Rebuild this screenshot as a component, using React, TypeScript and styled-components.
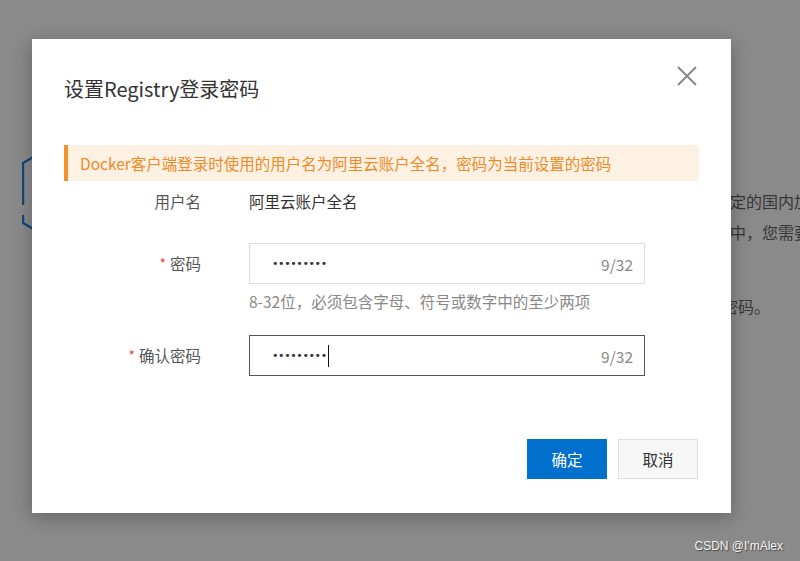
import styled, { createGlobalStyle } from 'styled-components';

const GlobalStyle = createGlobalStyle`
  html, body {
    margin: 0;
    padding: 0;
    width: 800px;
    height: 561px;
    overflow: hidden;
    background: #fff;
    font-family: 'Noto Sans CJK SC', 'Noto Sans', sans-serif;
  }
  * { box-sizing: border-box; }
`;

export default function App() {
  return (
    <Screen>
      <GlobalStyle />
      <BgPage>
        <Hexagon width="106" height="122" viewBox="0 0 106 122">
          <path
            d="M1 73 L1 31 L53 1 L105 31 L105 91 L53 121 L1 91 L1 83"
            fill="none"
            stroke="#1b86e6"
            strokeWidth="2.5"
          />
        </Hexagon>
        <BgText>
          <BgPara>
            <BgLine>指定的国内加速地址</BgLine>
            <BgLine>程中，您需要使用</BgLine>
            <BgLine />
          </BgPara>
          <BgPara $indent={8}>
            <BgLine>密码。</BgLine>
          </BgPara>
        </BgText>
      </BgPage>

      <Mask />

      <Dialog>
        <Header>
          <Title>设置Registry登录密码</Title>
          <CloseButton aria-label="关闭">
            <svg width="20" height="20" viewBox="0 0 20 20">
              <path d="M1 1 L19 19 M19 1 L1 19" stroke="#888" strokeWidth="2" fill="none" />
            </svg>
          </CloseButton>
        </Header>

        <Body>
          <Alert>Docker客户端登录时使用的用户名为阿里云账户全名，密码为当前设置的密码</Alert>

          <FormItem $gap={21}>
            <Label>用户名</Label>
            <StaticValue>阿里云账户全名</StaticValue>
          </FormItem>

          <FormItem $gap={23}>
            <Label>
              <Required>*</Required>密码
            </Label>
            <Control>
              <InputBox>
                <Dots>•••••••••</Dots>
                <Counter>9/32</Counter>
              </InputBox>
              <Help>8-32位，必须包含字母、符号或数字中的至少两项</Help>
            </Control>
          </FormItem>

          <FormItem $gap={0}>
            <Label>
              <Required>*</Required>确认密码
            </Label>
            <Control>
              <InputBox $focused>
                <Dots>•••••••••</Dots>
                <Caret />
                <Counter>9/32</Counter>
              </InputBox>
            </Control>
          </FormItem>
        </Body>

        <Footer>
          <Button $primary>确定</Button>
          <Button>取消</Button>
        </Footer>
      </Dialog>

      <Watermark>CSDN @I'mAlex</Watermark>
    </Screen>
  );
}

const Screen = styled.div`
  position: relative;
  width: 800px;
  height: 561px;
  overflow: hidden;
`;

const BgPage = styled.div`
  display: grid;
  grid-template-columns: 106px 1fr;
  column-gap: 586px;
  align-items: start;
  padding: 132px 0 0 22px;
  color: #666;
  font-size: 16px;
`;

const Hexagon = styled.svg`
  display: block;
`;

const BgText = styled.div`
  margin-top: 54px;
  white-space: nowrap;
`;

const BgPara = styled.div<{ $indent?: number }>`
  margin-bottom: 12px;
  padding-left: ${(p) => p.$indent ?? 0}px;
`;

const BgLine = styled.div`
  line-height: 31px;
  height: 31px;
`;

const Mask = styled.div`
  position: absolute;
  inset: 0;
  background: rgba(0, 0, 0, 0.46);
`;

const Dialog = styled.div`
  position: absolute;
  left: 32px;
  top: 39px;
  width: 699px;
  background: #fff;
  box-shadow: 0 4px 18px rgba(0, 0, 0, 0.28);
`;

const Header = styled.div`
  position: relative;
  padding: 36px 32px 42px;
`;

const Title = styled.h2`
  margin: 0;
  font-size: 20px;
  line-height: 28px;
  font-weight: 400;
  color: #333;
`;

const CloseButton = styled.button`
  position: absolute;
  top: 27px;
  right: 34px;
  width: 20px;
  height: 20px;
  padding: 0;
  border: 0;
  background: none;
  cursor: pointer;
  svg { display: block; }
`;

const Body = styled.div`
  padding: 0 32px;
`;

const Alert = styled.div`
  height: 36px;
  line-height: 36px;
  padding-left: 12px;
  border-left: 4px solid #f2922e;
  background: #fdf1e4;
  color: #f08a26;
  font-size: 15.5px;
`;

const FormItem = styled.div<{ $gap: number }>`
  display: grid;
  grid-template-columns: 137px 396px;
  column-gap: 48px;
  align-items: start;
  margin-bottom: ${(p) => p.$gap}px;
  font-size: 15.5px;
`;

const Label = styled.div`
  height: 41px;
  line-height: 41px;
  text-align: right;
  color: #555;
`;

const Required = styled.span`
  color: #e5483f;
  font-size: 14px;
  margin-right: 4px;
  vertical-align: 1px;
`;

const StaticValue = styled.div`
  height: 41px;
  line-height: 41px;
  color: #333;
`;

const Control = styled.div`
  display: flex;
  flex-direction: column;
`;

const InputBox = styled.div<{ $focused?: boolean }>`
  display: flex;
  align-items: center;
  height: 41px;
  padding: 0 11px 0 22px;
  border: 1px solid ${(p) => (p.$focused ? '#555' : '#dcdcdc')};
  background: #fff;
`;

const Dots = styled.span`
  color: #333;
  font-family: 'DejaVu Sans', sans-serif;
  font-size: 11px;
  letter-spacing: -0.4px;
`;

const Caret = styled.span`
  display: inline-block;
  width: 1px;
  height: 22px;
  margin-left: 1px;
  background: #111;
`;

const Counter = styled.span`
  margin-left: auto;
  color: #888;
`;

const Help = styled.div`
  margin-top: 6px;
  line-height: 22px;
  color: #888;
`;

const Footer = styled.div`
  display: flex;
  justify-content: flex-end;
  gap: 11px;
  padding: 63px 33px 34px;
`;

const Button = styled.button<{ $primary?: boolean }>`
  width: 80px;
  height: 40px;
  padding: 0;
  font-family: inherit;
  font-size: 15.5px;
  cursor: pointer;
  border: 1px solid ${(p) => (p.$primary ? '#0070cc' : '#dcdcdc')};
  background: ${(p) => (p.$primary ? '#0070cc' : '#f7f7f7')};
  color: ${(p) => (p.$primary ? '#fff' : '#333')};
`;

const Watermark = styled.div`
  position: absolute;
  right: 17px;
  bottom: 8px;
  font-family: 'Liberation Sans', Arial, sans-serif;
  font-size: 12px;
  color: #f4f4f4;
  text-shadow: 1px 1px 1px rgba(0, 0, 0, 0.5);
`;
